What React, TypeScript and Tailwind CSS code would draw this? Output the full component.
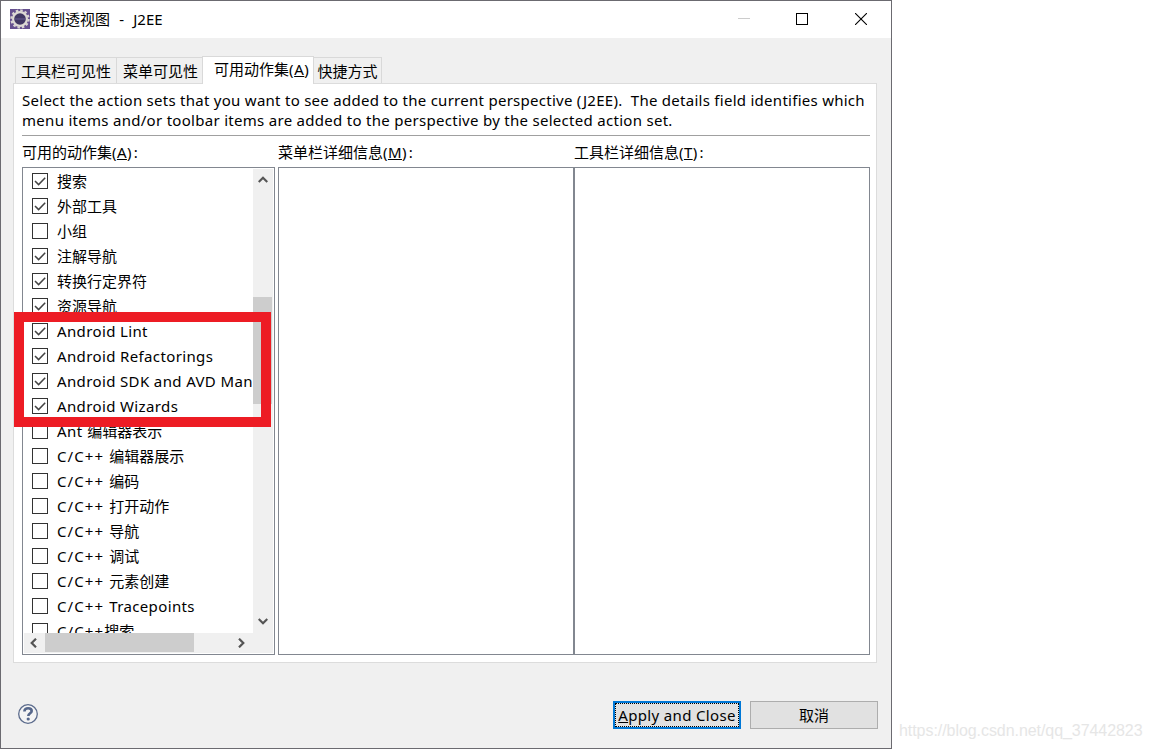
import clsx from "clsx";
import React from "react";

type ActionSet = { prefix?: string; label: string; checked?: boolean };

const actionSets: ActionSet[] = [
  { label: "搜索", checked: true },
  { label: "外部工具", checked: true },
  { label: "小组" },
  { label: "注解导航", checked: true },
  { label: "转换行定界符", checked: true },
  { label: "资源导航", checked: true },
  { label: "Android Lint", checked: true },
  { label: "Android Refactorings", checked: true },
  { label: "Android SDK and AVD Man", checked: true },
  { label: "Android Wizards", checked: true },
  { prefix: "Ant ", label: "编辑器表示" },
  { prefix: "C/C++ ", label: "编辑器展示" },
  { prefix: "C/C++ ", label: "编码" },
  { prefix: "C/C++ ", label: "打开动作" },
  { prefix: "C/C++ ", label: "导航" },
  { prefix: "C/C++ ", label: "调试" },
  { prefix: "C/C++ ", label: "元素创建" },
  { prefix: "C/C++ ", label: "Tracepoints" },
  { prefix: "C/C++", label: "搜索" },
];

function EclipseIcon() {
  return (
    <svg width="20" height="20" viewBox="0 0 20 20">
      <rect width="20" height="20" fill="#66508f" />
      <circle cx="10" cy="10" r="8.6" fill="none" stroke="#d9d5d3" strokeWidth="2.2" strokeDasharray="2.5 2" />
      <circle cx="10" cy="10" r="6.9" fill="#413763" stroke="#ddd9d4" strokeWidth="2.2" />
      <path d="M5 10h10" stroke="#5d5486" strokeWidth="1.4" />
    </svg>
  );
}

function TitleBar() {
  return (
    <div className="flex h-[37px] items-center bg-white pb-px pl-[9px] pr-6">
      <EclipseIcon />
      <span className="ml-[5px] whitespace-pre text-[15px]">
        定制透视图<span className="[word-spacing:0.7px]">  -  J2EE</span>
      </span>
      <div className="ml-auto flex items-center gap-[46px]">
        <svg width="12" height="12" viewBox="0 0 12 12">
          <path d="M0 5.5h12" stroke="#ccc" />
        </svg>
        <svg width="12" height="12" viewBox="0 0 12 12">
          <rect x="0.5" y="0.5" width="11" height="11" fill="none" stroke="#000" />
        </svg>
        <svg width="12" height="12" viewBox="0 0 12 12" className="ml-[1px]">
          <path d="M0 0l12 12M12 0L0 12" stroke="#000" strokeWidth="1.1" />
        </svg>
      </div>
    </div>
  );
}

function Tabs() {
  return (
    <div className="ml-[14px] flex h-[28px] items-end">
      <div className="flex h-[26px] w-[102px] items-center justify-center border border-b-0 border-[#d9d9d9]">
        工具栏可见性
      </div>
      <div className="flex h-[26px] w-[85px] items-center justify-center border-t border-[#d9d9d9] pl-[2px]">
        菜单可见性
      </div>
      <div className="relative z-10 -mb-px flex h-[28px] w-[112px] items-center border border-b-0 border-[#d9d9d9] bg-white pb-[3px] pl-[11px]">
        可用动作集<span className="tracking-[0.6px]">(<u>A</u>)</span>
      </div>
      <div className="flex h-[26px] w-[68px] items-center justify-center border border-b-0 border-l-0 border-[#d9d9d9]">
        快捷方式
      </div>
    </div>
  );
}

function Checkbox({ checked }: { checked?: boolean }) {
  return (
    <svg width="16" height="16" viewBox="0 0 16 16" className="mt-1 shrink-0">
      <rect x="0.5" y="0.5" width="15" height="15" fill="#fff" stroke="#333" />
      {checked && <path d="M3 8l3.6 3.6L13.2 4.8" fill="none" stroke="#444" strokeWidth="1.5" />}
    </svg>
  );
}

function Arrow({ className }: { className?: string }) {
  return (
    <svg width="10" height="10" viewBox="0 0 10 10" className={clsx("shrink-0", className)}>
      <path d="M0.7 7L5 2.7L9.3 7" fill="none" stroke="#555" strokeWidth="2.2" />
    </svg>
  );
}

function ActionSetList() {
  return (
    <div className="flex h-[488px] w-[253px] flex-col border border-[#828790] p-px">
      <div className="flex h-[464px]">
        <div className="w-[229px] overflow-hidden">
          {actionSets.map((set) => (
            <div key={`${set.prefix}${set.label}`} className="flex h-[25px] pl-2">
              <Checkbox checked={set.checked} />
              <span className="ml-[9px] whitespace-pre leading-[25px]">
                {set.prefix && (
                  <span className={set.prefix.startsWith("C") ? "tracking-[1.1px]" : "tracking-[0.5px]"}>
                    {set.prefix}
                  </span>
                )}
                <span className={/^[A-Z]/.test(set.label) ? "tracking-[0.37px]" : ""}>{set.label}</span>
              </span>
            </div>
          ))}
        </div>
        <div className="flex w-5 flex-col items-center bg-[#f0f0f0]">
          <Arrow className="mr-px mt-[6px]" />
          <div className="mt-[112px] h-[107px] w-[19px] self-start bg-[#cdcdcd]" />
          <Arrow className="mb-[7px] mr-px mt-auto rotate-180" />
        </div>
      </div>
      <div className="flex h-5 w-[249px] items-center bg-[#f0f0f0] pb-px pr-[27px]">
        <Arrow className="ml-[5px] -rotate-90" />
        <div className="ml-[6px] h-[19px] w-[149px] self-start bg-[#cdcdcd]" />
        <Arrow className="ml-auto rotate-90" />
      </div>
    </div>
  );
}

function Column({ title, hotkey, children }: { title: string; hotkey: string; children: React.ReactNode }) {
  return (
    <div>
      <div className="h-[31px] leading-[33px]">
        {title}
        <span className="tracking-[0.4px]">
          (<u>{hotkey}</u>)
        </span>
        <span className="ml-[2px]">:</span>
      </div>
      {children}
    </div>
  );
}

function HelpIcon() {
  return (
    <svg width="20" height="20" viewBox="0 0 20 20" className="-mt-[2px]">
      <circle cx="10" cy="10" r="9.3" fill="#f4f4f4" stroke="#5b6b8c" strokeWidth="1.3" />
      <path
        d="M6.4 7.4C6.4 5.2 8 4.2 10.1 4.2c2.1 0 3.6 1 3.6 2.8 0 2.3-3.4 2.2-3.4 5"
        fill="none"
        stroke="#56678b"
        strokeWidth="2.6"
      />
      <circle cx="10.2" cy="15" r="1.6" fill="#56678b" />
    </svg>
  );
}

export default function App() {
  return (
    <div className="flex h-[749px] w-[1152px] items-end overflow-hidden bg-white font-['Noto_Sans','Noto_Sans_CJK_SC',sans-serif] text-[15px] leading-5 text-black">
      <div className="relative h-[749px] w-[892px] shrink-0 border border-[#6b6a70] bg-[#f0f0f0]">
        <TitleBar />
        <div className="pt-[17px]">
          <Tabs />
        </div>
        <div className="ml-3 h-[580px] w-[864px] border border-[#dcdcdc] bg-white pl-2 pr-1.5 pt-[6px]">
          <div className="h-[46px] whitespace-pre border-b border-[#a0a0a0] tracking-[0.27px]">
            <p>Select the action sets that you want to see added to the current perspective (J2EE).  The details field identifies which</p>
            <p className="tracking-[0.29px]">
              menu items and/or toolbar items are added to the perspective by the selected action set.
            </p>
          </div>
          <div className="flex">
            <Column title="可用的动作集" hotkey="A">
              <ActionSetList />
            </Column>
            <div className="ml-[3px] flex">
              <Column title="菜单栏详细信息" hotkey="M">
                <div className="h-[488px] w-[296px] border border-[#828790]" />
              </Column>
              <Column title="工具栏详细信息" hotkey="T">
                <div className="h-[488px] w-[296px] border border-[#828790]" />
              </Column>
            </div>
          </div>
        </div>
        <div className="mt-[38px] flex items-center pl-[17px] pr-[13px]">
          <HelpIcon />
          <button className="ml-auto h-7 w-32 border-2 border-[#0078d7] bg-[#e1e1e1]">
            <span className="flex h-full items-center justify-center whitespace-pre border border-dotted border-black tracking-[0.35px]">
              <u>A</u>pply and Close
            </span>
          </button>
          <button className="ml-[9px] h-7 w-32 border border-[#adadad] bg-[#e1e1e1]">取消</button>
        </div>
        {/* highlight over the Android entries */}
        <div className="absolute left-[13px] top-[311px] z-20 h-[115px] w-[257px] border-10 border-[#ed1c24]" />
      </div>
      <span className="mb-2 ml-[7px] font-['Liberation_Sans',sans-serif] text-[16px] tracking-[-0.06px] text-[#e6e6e6]">
        https://blog.csdn.net/qq_37442823
      </span>
    </div>
  );
}
